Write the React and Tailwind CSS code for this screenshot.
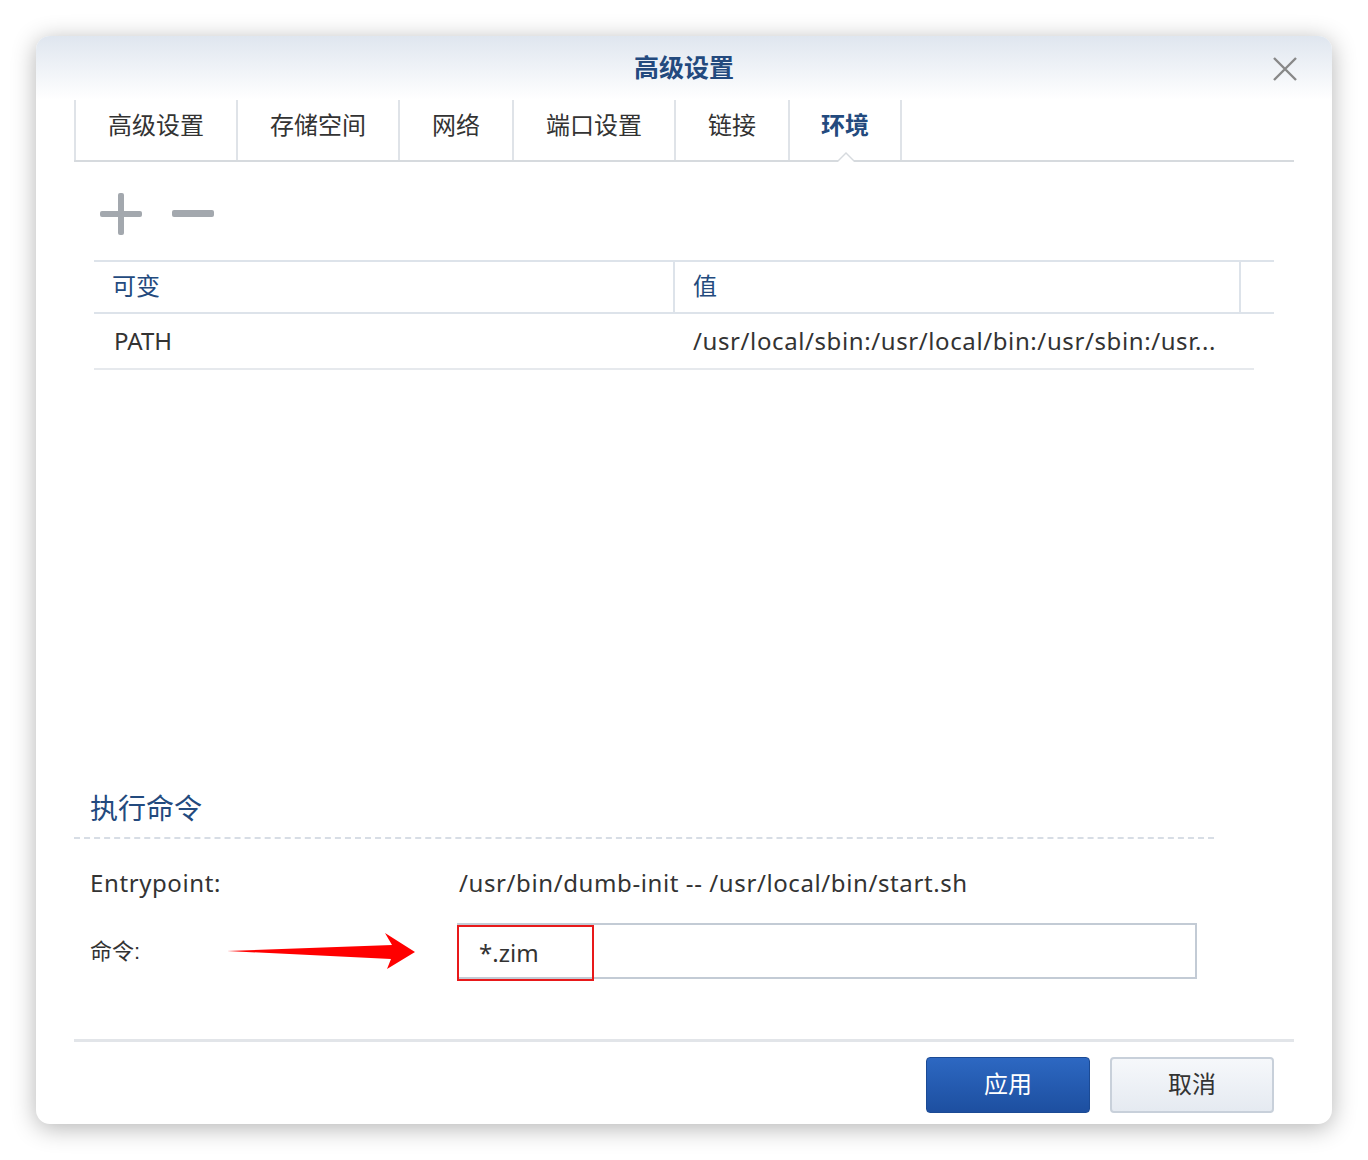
export default function App() {
  const tabs = [["高级设置", 162], ["存储空间", 162], ["网络", 114], ["端口设置", 162], ["链接", 114], ["环境", 114]];
  const lat = { fontFamily: '"Noto Sans","Noto Sans CJK SC",sans-serif' };
  return (
    <div className="w-[1368px] h-[1160px] bg-white pt-[36px] pl-[36px]" style={{ fontFamily: '"Liberation Sans","Noto Sans CJK SC",sans-serif' }}>
      <div className="relative w-[1296px] h-[1088px] rounded-[14px] bg-white shadow-[0_4px_24px_rgba(0,0,0,0.3)] overflow-hidden">
        <div className="h-[64px] bg-gradient-to-b from-[#dfe6ef] to-white flex items-center justify-center pt-[2px]">
          <span className="text-[25px] font-bold text-[#234a7e]">高级设置</span>
        </div>
        <svg className="absolute right-[34px] top-[20px]" width="26" height="26" viewBox="0 0 26 26"><path d="M2 2L24 24M24 2L2 24" stroke="#888" strokeWidth="2.4" /></svg>
        <div className="mx-[38px] h-[62px] flex border-b-2 border-[#d6dade] relative">
          {tabs.map(([t, w], i) => (
            <div key={t} className={`h-[60px] flex items-center justify-center pb-[8px] border-l-2 border-[#dfe3e8] text-[24px] ${i === 5 ? "font-bold text-[#234a7e] border-r-2" : "text-[#333]"}`} style={{ width: w }}>{t}</div>
          ))}
          <div className="absolute left-[762px] bottom-[-2px] w-0 h-0 border-l-[10px] border-r-[10px] border-b-[10px] border-l-transparent border-r-transparent border-b-[#d6dade]" />
          <div className="absolute left-[764px] bottom-[-2px] w-0 h-0 border-l-[8px] border-r-[8px] border-b-[8px] border-l-transparent border-r-transparent border-b-white" />
        </div>
        <div className="flex items-center gap-[30px] ml-[64px] mt-[30px] h-[44px]">
          <svg width="42" height="42" viewBox="0 0 42 42"><rect x="18" y="0" width="6" height="42" rx="2" fill="#a3a8ae" /><rect x="0" y="18" width="42" height="6" rx="2" fill="#a3a8ae" /></svg>
          <svg width="42" height="8" viewBox="0 0 42 8"><rect x="0" y="0" width="42" height="7" rx="2" fill="#a3a8ae" /></svg>
        </div>
        <div className="ml-[58px] mt-[24px] w-[1180px]">
          <div className="flex h-[54px] border-t-2 border-b-2 border-[#dde3ea] text-[24px] text-[#234a7e]">
            <div className="w-[581px] pl-[18px] flex items-center border-r-2 border-[#dde3ea]">可变</div>
            <div className="w-[566px] pl-[18px] flex items-center border-r-2 border-[#dde3ea]">值</div>
          </div>
          <div className="flex h-[56px] w-[1160px] border-b-2 border-[#e6e9ed] text-[24px] text-[#333] items-center" style={lat}>
            <div className="w-[581px] pl-[20px]">PATH</div>
            <div className="w-[566px] pl-[18px] whitespace-nowrap tracking-[0.6px]">/usr/local/sbin:/usr/local/bin:/usr/sbin:/usr...</div>
          </div>
        </div>
        <div className="mt-[419px] ml-[54px] text-[28px] text-[#234a7e]">执行命令</div>
        <div className="ml-[38px] w-[1140px] mt-[6px] border-t-2 border-dashed border-[#d7dde5]" />
        <div className="flex ml-[54px] mt-[24px] text-[24px] text-[#333] h-[40px] items-center" style={lat}>
          <div className="w-[369px] tracking-[0.6px]">Entrypoint:</div>
          <div className="tracking-[0.6px]">/usr/bin/dumb-init -- /usr/local/bin/start.sh</div>
        </div>
        <div className="flex ml-[54px] mt-[20px] items-center h-[56px]">
          <div className="w-[137px] text-[22px] text-[#333]">命令:</div>
          <svg width="190" height="36" viewBox="0 0 190 36" className="mr-[40px]"><path d="M0 18L165 12L158 0L188 19L160 36L164 26Z" fill="#f00" /></svg>
          <div className="relative w-[740px] h-[56px] border-2 border-[#c3cbd5] bg-white">
            <div className="absolute left-[-2px] top-0 w-[137px] h-[56px] border-2 border-[#e8191a] flex items-center pl-[20px] text-[24px] text-[#333]" style={lat}>*.zim</div>
          </div>
        </div>
        <div className="ml-[38px] w-[1220px] mt-[60px] border-t-[3px] border-[#e2e5e9]" />
        <div className="flex justify-end gap-[20px] mr-[58px] mt-[15px]">
          <div className="w-[164px] h-[56px] rounded-[4px] bg-gradient-to-b from-[#2d68c2] to-[#1d4fa0] border border-[#1b4a94] text-white text-[24px] flex items-center justify-center">应用</div>
          <div className="w-[164px] h-[56px] rounded-[4px] bg-gradient-to-b from-[#f6f8fb] to-[#e5eaf1] border-2 border-[#c8d0da] text-[#333] text-[24px] flex items-center justify-center">取消</div>
        </div>
      </div>
    </div>
  );
}
